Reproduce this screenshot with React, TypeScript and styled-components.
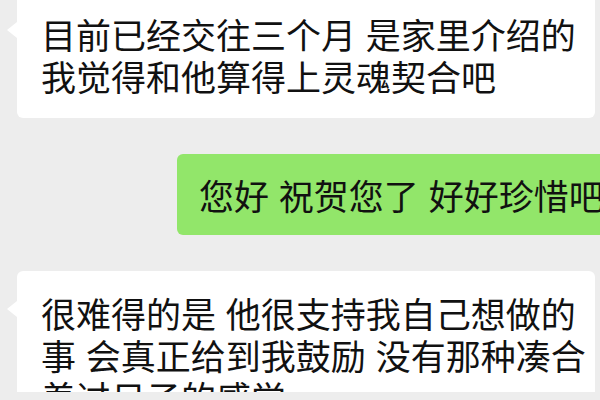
import styled, {createGlobalStyle} from "styled-components";

const GlobalStyle = createGlobalStyle`
    html, body {
        margin: 0;
        padding: 0;
        overflow: hidden;
        background-color: #ededed;
    }
    body {
        font-family: "Noto Sans CJK SC", "Noto Sans", sans-serif;
        color: #111111;
    }
`;

const Chat = styled.div`
    width: 600px;
    height: 400px;
    overflow: hidden;
    background-color: #ededed;
    display: flex;
    flex-direction: column;
    gap: 36px;
    padding-left: 17px;
    box-sizing: border-box;
    margin-top: -8px;
`;

const Row = styled.div<{ $mine?: boolean }>`
    display: flex;
    padding-left: ${(p) => (p.$mine ? "160px" : "0")};
`;

const Bubble = styled.div<{ $mine?: boolean }>`
    position: relative;
    box-sizing: border-box;
    width: ${(p) => (p.$mine ? "auto" : "578px")};
    padding: ${(p) => (p.$mine ? "20px 22px 19px 22px" : "21px 18px 21px 24px")};
    background-color: ${(p) => (p.$mine ? "#92e66a" : "#ffffff")};
    border-radius: 6px;
    font-size: 35px;
    line-height: 42px;
    white-space: nowrap;
    flex-shrink: 0;
    word-spacing: 2px;

    &::before {
        content: "";
        position: absolute;
        top: 30px;
        ${(p) => (p.$mine ? "right: -10px;" : "left: -10px;")}
        border-top: 8px solid transparent;
        border-bottom: 8px solid transparent;
        ${(p) => (p.$mine ? "border-left: 10px solid #92e66a;" : "border-right: 10px solid #ffffff;")}
    }
`;

const messages = [
    {mine: false, lines: ["目前已经交往三个月 是家里介绍的", "我觉得和他算得上灵魂契合吧"]},
    {mine: true, lines: ["您好 祝贺您了 好好珍惜吧"]},
    {mine: false, lines: ["很难得的是 他很支持我自己想做的", "事 会真正给到我鼓励 没有那种凑合", "着过日子的感觉"]},
];

export default function App() {
    return (
        <>
            <GlobalStyle/>
            <Chat>
                {messages.map((m, i) => (
                    <Row key={i} $mine={m.mine}>
                        <Bubble $mine={m.mine}>
                            {m.lines.map((line, j) => (
                                <div key={j}>{line}</div>
                            ))}
                        </Bubble>
                    </Row>
                ))}
            </Chat>
        </>
    );
}
